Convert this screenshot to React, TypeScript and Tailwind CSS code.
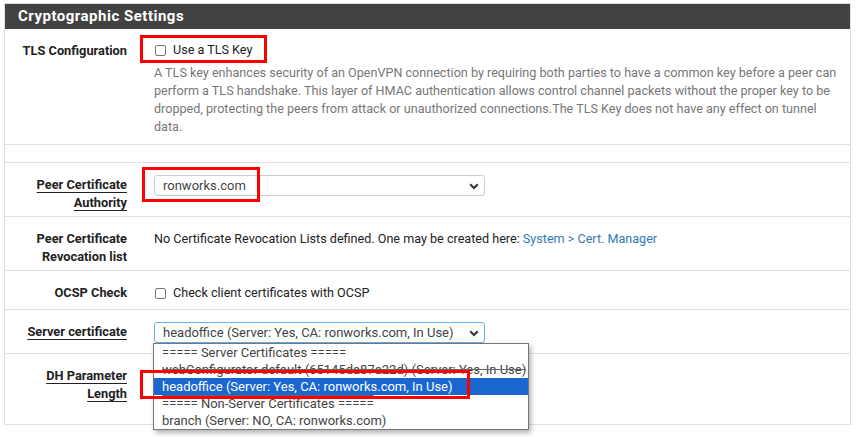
import React from "react";

const FONT = { fontFamily: "Roboto, 'Liberation Sans', sans-serif" };

function Check({ label }: { label: string }) {
  return (
    <div className="flex items-center h-[18px]">
      <span className="w-[11px] h-[11px] border border-[#767676] rounded-[2px] bg-white ml-[1px] mr-[7px]" />
      <span className="text-[#222]">{label}</span>
    </div>
  );
}

function Chevron() {
  return (
    <svg width="10" height="7" viewBox="0 0 10 7" className="absolute right-[5px] top-[7px]">
      <path d="M1.2 1.3 L5 5 L8.8 1.3" fill="none" stroke="#333" strokeWidth="2" />
    </svg>
  );
}

function Select({ value, focused }: { value: string; focused?: boolean }) {
  return (
    <div
      className={`relative w-[331px] h-[21px] rounded-[3px] border bg-white pl-[8px] leading-[19px] text-[13px] text-[#444] ${
        focused ? "border-[#66afe9]" : "border-[#ccc]"
      }`}
    >
      {value}
      <Chevron />
    </div>
  );
}

function Row({
  h,
  label,
  underline,
  children,
}: {
  h: string;
  label?: React.ReactNode;
  underline?: boolean;
  children?: React.ReactNode;
}) {
  return (
    <div className={`flex border-b border-[#e0e0e0] ${h}`}>
      <div
        className={`w-[122px] shrink-0 pt-[13px] text-right font-bold text-[12.8px] text-[#222] leading-[18px] ${
          underline ? "underline underline-offset-[3px]" : ""
        }`}
      >
        {label}
      </div>
      <div className="flex-1 pl-[27px] pt-[13px] leading-[18px] relative">{children}</div>
    </div>
  );
}

export default function App() {
  return (
    <div className="relative w-[857px] h-[437px] bg-white overflow-hidden text-[12.6px]" style={FONT}>
      <div className="ml-[4px] mt-[3px] w-[847px] border border-[#e0e0e0] border-b-0">
        {/* Header */}
        <div className="h-[25px] bg-[#424242] text-white font-bold text-[15px] tracking-[0.5px] pl-[13px] leading-[25px]">
          Cryptographic Settings
        </div>

        <Row h="h-[116px]" label="TLS Configuration">
          <div className="-mt-[1px]">
            <Check label="Use a TLS Key" />
          </div>
          <p className="mt-[5px] text-[#777] leading-[18px] pr-[8px]">
            A TLS key enhances security of an OpenVPN connection by requiring both parties to have a common key before a peer can
            perform a TLS handshake. This layer of HMAC authentication allows control channel packets without the proper key to be
            dropped, protecting the peers from attack or unauthorized connections.The TLS Key does not have any effect on tunnel
            data.
          </p>
        </Row>

        <div className="h-[18px] border-b border-[#e0e0e0]" />

        <Row
          h="h-[54px]"
          underline
          label={
            <>
              Peer Certificate
              <br />
              Authority
            </>
          }
        >
          <div className="-mt-[1px]">
            <Select value="ronworks.com" />
          </div>
        </Row>

        <Row
          h="h-[54px]"
          label={
            <>
              Peer Certificate
              <br />
              Revocation list
            </>
          }
        >
          <span className="text-[#222]">
            No Certificate Revocation Lists defined. One may be created here:{" "}
            <span className="text-[#337ab7]">System &gt; Cert. Manager</span>
          </span>
        </Row>

        <Row h="h-[39px]" label="OCSP Check">
          <Check label="Check client certificates with OCSP" />
        </Row>

        <Row h="h-[44px]" underline label="Server certificate">
          <div className="-mt-[1px]">
            <Select value="headoffice (Server: Yes, CA: ronworks.com, In Use)" focused />
          </div>
        </Row>

        <Row
          h="h-[71px]"
          underline
          label={
            <>
              DH Parameter
              <br />
              Length
            </>
          }
        />
      </div>

      {/* Open dropdown list */}
      <div className="absolute left-[153px] top-[343px] w-[376px] bg-white border border-[#767676] shadow-[2px_3px_5px_rgba(0,0,0,0.3)] leading-[17px] text-[13px] text-[#444]">
        <div className="pl-[8px] h-[17px]">===== Server Certificates =====</div>
        <div className="pl-[8px] h-[17px] line-through decoration-[#666]">
          webConfigurator default (65145da87a22d) (Server: Yes, In Use)
        </div>
        <div className="pl-[8px] h-[17px] bg-[#1a67d2] text-white">headoffice (Server: Yes, CA: ronworks.com, In Use)</div>
        <div className="pl-[8px] h-[17px] overline decoration-[#666]">===== Non-Server Certificates =====</div>
        <div className="pl-[8px] h-[17px]">branch (Server: NO, CA: ronworks.com)</div>
      </div>

      {/* Annotation boxes */}
      <div className="absolute left-[140px] top-[35px] w-[127px] h-[28px] border-[3px] border-[#ff0000]" />
      <div className="absolute left-[142px] top-[167px] w-[118px] h-[35px] border-[3px] border-[#ff0000]" />
      <div className="absolute left-[140px] top-[370px] w-[330px] h-[29px] border-[3px] border-[#ff0000]" />
    </div>
  );
}
